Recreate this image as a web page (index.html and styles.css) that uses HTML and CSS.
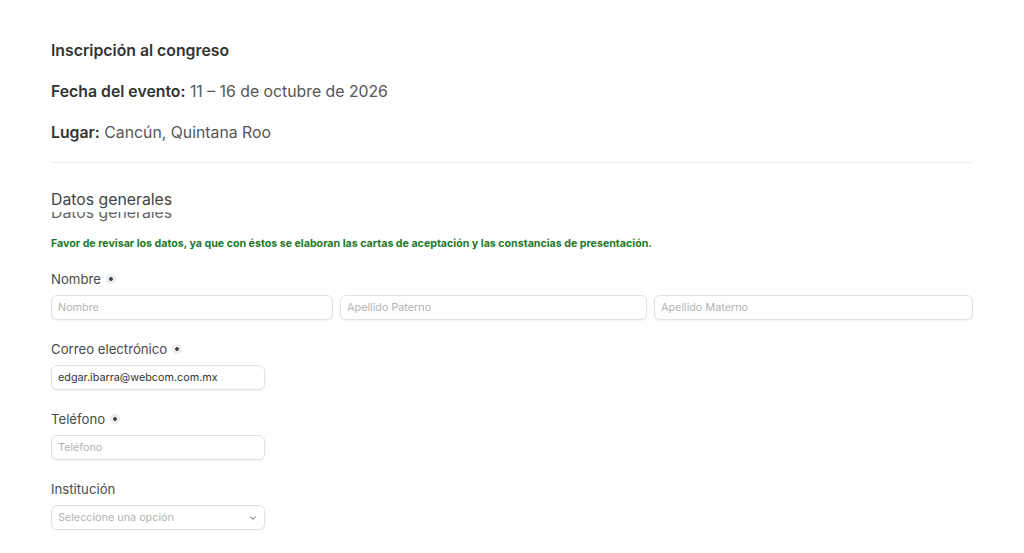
FILE: index.html
```html
<!DOCTYPE html>
<html lang="es">
<head>
  <meta charset="UTF-8" />
  <meta name="viewport" content="width=device-width, initial-scale=1.0" />
  <title>Inscripción al congreso</title>
  <link rel="stylesheet" href="styles.css">
</head>
<body>
  <main class="page">
    <!-- datos del evento -->
    <section class="event">
      <h1>Inscripción al congreso</h1>
      <p><strong>Fecha del evento:</strong> 11 – 16 de octubre de 2026</p>
      <p><strong>Lugar:</strong> Cancún, Quintana Roo</p>
    </section>

    <form class="form">
      <h2>Datos generales</h2>
      <div class="legend-cut"><span>Datos generales</span></div>
      <p class="notice">Favor de revisar los datos, ya que con éstos se elaboran las cartas de aceptación y las constancias de presentación.</p>

      <div class="form-row">
        <label>Nombre <span class="req"></span></label>
        <div class="name-row">
          <input type="text" placeholder="Nombre" />
          <input type="text" placeholder="Apellido Paterno" />
          <input type="text" placeholder="Apellido Materno" />
        </div>
      </div>

      <div class="form-row">
        <label>Correo electrónico <span class="req"></span></label>
        <input type="text" class="short" value="edgar.ibarra@webcom.com.mx" />
      </div>

      <div class="form-row">
        <label>Teléfono <span class="req"></span></label>
        <input type="text" class="short" placeholder="Teléfono" />
      </div>

      <div class="form-row">
        <label>Institución</label>
        <div class="select short">
          <span>Seleccione una opción</span>
          <svg width="8" height="6" viewBox="0 0 8 6"><path d="M1.5 2l2.5 2.2L6.5 2" fill="none" stroke="#999" stroke-width="1.1" stroke-linecap="round"/></svg>
        </div>
      </div>
    </form>
  </main>
</body>
</html>
```

FILE: styles.css
```css
* {
  margin: 0;
  padding: 0;
  box-sizing: border-box;
  font-family: 'Inter', 'Noto Sans', sans-serif;
}

body {
  background: #ffffff;
  color: #3a3a3a;
}

.page {
  padding: 41px 51px 0 51px;
  width: 1024px;
}

.event {
  padding-bottom: 19px;
  border-bottom: 1px solid #ededed;
  margin-right: 1px;
}

.event h1 {
  font-size: 15.8px;
  font-weight: 600;
  color: #333;
  line-height: 20px;
}

.event p {
  font-size: 15.8px;
  line-height: 20px;
  margin-top: 21px;
  color: #555;
}

.event strong {
  font-weight: 600;
  color: #333;
}

.form h2 {
  font-size: 15.8px;
  font-weight: 400;
  line-height: 20px;
  margin-top: 27px;
  color: #444;
}

.legend-cut {
  height: 11px;
  overflow: hidden;
  margin-top: 2px;
}

.legend-cut span {
  display: block;
  font-size: 15.8px;
  line-height: 20px;
  color: #666;
  margin-top: -9px;
}

.notice {
  font-size: 10.65px;
  font-weight: 700;
  color: #23792a;
  margin-top: 14px;
  line-height: 14px;
}

.form-row {
  margin-top: 21px;
}

.notice + .form-row {
  margin-top: 20px;
}

label {
  display: flex;
  align-items: center;
  gap: 5px;
  font-size: 13.2px;
  line-height: 16px;
  color: #4a4a4a;
  margin-bottom: 8px;
}

.req {
  display: inline-block;
  width: 10px;
  height: 10px;
  border-radius: 50%;
  background: radial-gradient(circle, #444 0 1.5px, #ececec 2.2px);
}

.name-row {
  display: flex;
  gap: 7px;
}

.name-row input:nth-child(1) { width: 283px; }
.name-row input:nth-child(2) { width: 308px; }
.name-row input:nth-child(3) { width: 320px; }

input[type="text"],
.select {
  height: 25px;
  padding: 0 6px;
  font-size: 10.8px;
  color: #333;
  border: 1px solid #e2e2e2;
  border-radius: 6px;
  box-shadow: 0 1px 2px rgba(0,0,0,0.06);
  outline: none;
  background: #fff;
}

input::placeholder {
  color: #b3b3b3;
}

.short {
  width: 214px;
}

.select {
  display: flex;
  align-items: center;
  justify-content: space-between;
  color: #b3b3b3;
  padding-right: 7px;
}
```
